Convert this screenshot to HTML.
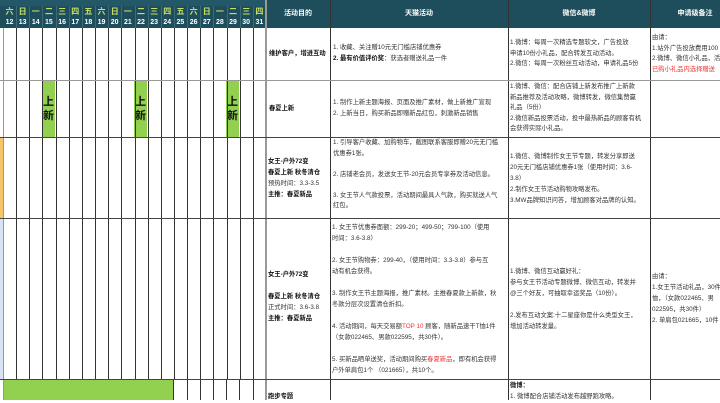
<!DOCTYPE html>
<html><head><meta charset="utf-8"><style>
*{margin:0;padding:0;box-sizing:border-box}
body{width:720px;height:400px;overflow:hidden;background:#fff;position:relative;font-family:"Liberation Sans","Noto Sans CJK SC",sans-serif;color:#222}
.a{position:absolute}
.hd{background:#1e4d5c}
.vl{position:absolute;width:1px;background:#333}
.hl{position:absolute;height:1px;background:#444}
.wk{position:absolute;top:6px;height:11px;font-size:8px;color:#c7e06a;text-align:center;line-height:11px;font-weight:bold}
.dn{position:absolute;top:17px;height:11px;font-size:7px;color:#fff;text-align:center;line-height:11px;font-weight:bold}
.t{position:absolute;font-size:6.3px;line-height:10.5px;color:#333;white-space:nowrap}
.b{font-weight:bold;color:#111}
.r{color:#e33}
.th{position:absolute;top:0;height:28px;color:#fff;font-size:7px;line-height:28px;text-align:center;font-weight:bold}
.g{position:absolute;background:#92d050}
.sx{position:absolute;font-size:11px;font-weight:bold;line-height:14px;text-align:center;width:13px;color:#111}
</style></head><body>
<div class="a hd" style="left:0;top:0;width:720px;height:28px"></div>
<div class="a" style="left:0;top:0;width:266px;height:6px;background:#235868"></div>

<div class="a" style="left:0;top:137px;width:3px;height:81px;background:#f8c46a"></div>
<div class="a" style="left:0;top:218px;width:3px;height:161px;background:#d6e4f5"></div>
<div class="g" style="left:3px;top:380px;width:170px;height:20px"></div>
<div class="g" style="left:42px;top:81px;width:13px;height:56px"></div>
<div class="g" style="left:134px;top:81px;width:13px;height:56px"></div>
<div class="g" style="left:226px;top:81px;width:13px;height:56px"></div>
<div class="sx" style="left:42px;top:95px">上<br>新</div>
<div class="sx" style="left:134px;top:95px">上<br>新</div>
<div class="sx" style="left:226px;top:95px">上<br>新</div>

<div id="cols"></div>
<script>
var wk=["六","日","一","二","三","四","五","六","日","一","二","三","四","五","六","日","一","二","三","四"];
var h="";
for(var i=0;i<20;i++){var x=3+i*13.15;
h+='<div class="wk" style="left:'+x+'px;width:13px">'+wk[i]+'</div>';
h+='<div class="dn" style="left:'+x+'px;width:13px">'+(12+i)+'</div>';
if(i>0){h+='<div class="vl" style="left:'+Math.round(x)+'px;top:28px;height:352px"></div>';
h+='<div class="vl" style="left:'+Math.round(x)+'px;top:6px;height:22px;background:#3d6b78"></div>';}
}
h+='<div class="vl" style="left:3px;top:28px;height:372px;background:#999"></div>';
document.getElementById("cols").innerHTML=h;
</script>
<div class="vl" style="left:173px;top:380px;height:20px"></div>
<div class="vl" style="left:187px;top:380px;height:20px"></div>
<div class="vl" style="left:200px;top:380px;height:20px"></div>
<div class="vl" style="left:213px;top:380px;height:20px"></div>
<div class="vl" style="left:226px;top:380px;height:20px"></div>
<div class="vl" style="left:239px;top:380px;height:20px"></div>
<div class="vl" style="left:253px;top:380px;height:20px"></div>
<div class="vl" style="left:265px;top:0;height:400px;width:2px;background:#999"></div>
<div class="vl" style="left:330px;top:0;height:400px"></div>
<div class="vl" style="left:508px;top:0;height:400px"></div>
<div class="vl" style="left:650px;top:0;height:400px"></div>

<div class="hl" style="left:0;top:80px;width:720px;background:#999"></div>
<div class="hl" style="left:0;top:137px;width:720px"></div>
<div class="hl" style="left:0;top:218px;width:720px"></div>
<div class="hl" style="left:0;top:379px;width:720px"></div>

<div class="th" style="left:266px;width:64px">活动目的</div>
<div class="th" style="left:330px;width:178px">天猫活动</div>
<div class="th" style="left:508px;width:142px">微信&amp;微博</div>
<div class="th" style="left:650px;width:90px">申请级备注</div>

<div class="t b" style="left:269px;top:49px">维护客户，增进互动</div>
<div class="t" style="left:333px;top:43px">1. 收藏、关注赠10元无门槛店铺优惠券<br><span class="b">2. 最有价值评价奖</span>：获选者赠送礼品一件</div>
<div class="t" style="left:510px;top:38px">1.微博：每周一次精选专题软文，广告投放<br>申请10份小礼品，配合转发互动活动。<br>2.微信：每周一次粉丝互动活动，申请礼品5份</div>
<div class="t" style="left:652px;top:33px">由请：<br>1.站外广告投放费用100<br>2.微博、微信小礼品，活<br><span class="r">已购小礼品内选择赠送</span></div>

<div class="t b" style="left:269px;top:104px">春夏上新</div>
<div class="t" style="left:333px;top:98px">1. 制作上新主题海报、页面及推广素材，做上新推广宣现<br>2. 上新当日，购买新品即赠新品红包，刺激新品销售</div>
<div class="t" style="left:510px;top:82px">1.微博、微信：配合店铺上新发布推广上新款<br>新品推荐及活动攻略，微博转发，微信集赞赢<br>礼品（5份）<br>2.微信新品投票活动，投中最热新品的顾客有机<br>会获得实际小礼品。</div>

<div class="t" style="left:268px;top:156px;line-height:11px"><span class="b">女王-户外72变</span><br><span class="b">春夏上新 秋冬清仓</span><br>预热时间：3.3-3.5<br><span class="b">主推：春夏新品</span></div>
<div class="t" style="left:333px;top:138px">1. 引导客户收藏、加购物车，截图联系客服即赠20元无门槛<br>优惠券1张。<br><br>2. 店铺老会员，发送女王节-20元会员专享券及活动信息。<br><br>3. 女王节人气款投票，活动期间最具人气款，购买就送人气<br>红包。</div>
<div class="t" style="left:510px;top:151px;line-height:11px">1.微信、微博制作女王节专题，转发分享即送<br>20元无门槛店铺优惠券1张（使用时间：3.6-<br>3.8）<br>2.制作女王节活动购物攻略发布。<br>3.MW品牌知识问答，增加顾客对品牌的认知。</div>

<div class="t" style="left:268px;top:269px;line-height:11px"><span class="b">女王-户外72变</span><br><br><span class="b">春夏上新 秋冬清仓</span><br>正式时间：3.6-3.8<br><span class="b">主推：春夏新品</span></div>
<div class="t" style="left:332px;top:222px;line-height:11px">1. 女王节优惠券面额：299-20；499-50；799-100（使用<br>时间：3.6-3.8）<br><br>2. 女王节购物券：299-40，（使用时间：3.3-3.8）参与互<br>动有机会获得。<br><br>3. 制作女王节主题海报，推广素材。主推春夏款上新款，秋<br>冬款分层次设置清仓折扣。<br><br>4. 活动期间，每天交易额<span class="r">TOP 10</span> 顾客，随新品速干T恤1件<br>（女款022465、男款022595，共30件）。<br><br>5. 买新品晒单送奖，活动期间购买<span class="r">春夏新品</span>，即有机会获得<br>户外单肩包1个 （021665），共10个。</div>
<div class="t" style="left:510px;top:266px;line-height:11px">1.微博、微信互动赢好礼：<br>参与女王节活动专题微博、微信互动，转发并<br>@三个好友，可抽取幸运奖品（10份）。<br><br>2.发布互动文案:十二星座你是什么类型女王，<br>增加活动转发量。</div>
<div class="t" style="left:652px;top:271px;line-height:11px">由请：<br>1.女王节活动礼品，30件<br>恤，（女款022465、男<br>022595，共30件）<br>2. 单肩包021665，10件</div>

<div class="t b" style="left:268px;top:392px">跑步专题</div>
<div class="t" style="left:510px;top:380px;line-height:11px"><span class="b">微博：</span><br>1. 微博配合店铺活动发布越野跑攻略。</div>
</body></html>
